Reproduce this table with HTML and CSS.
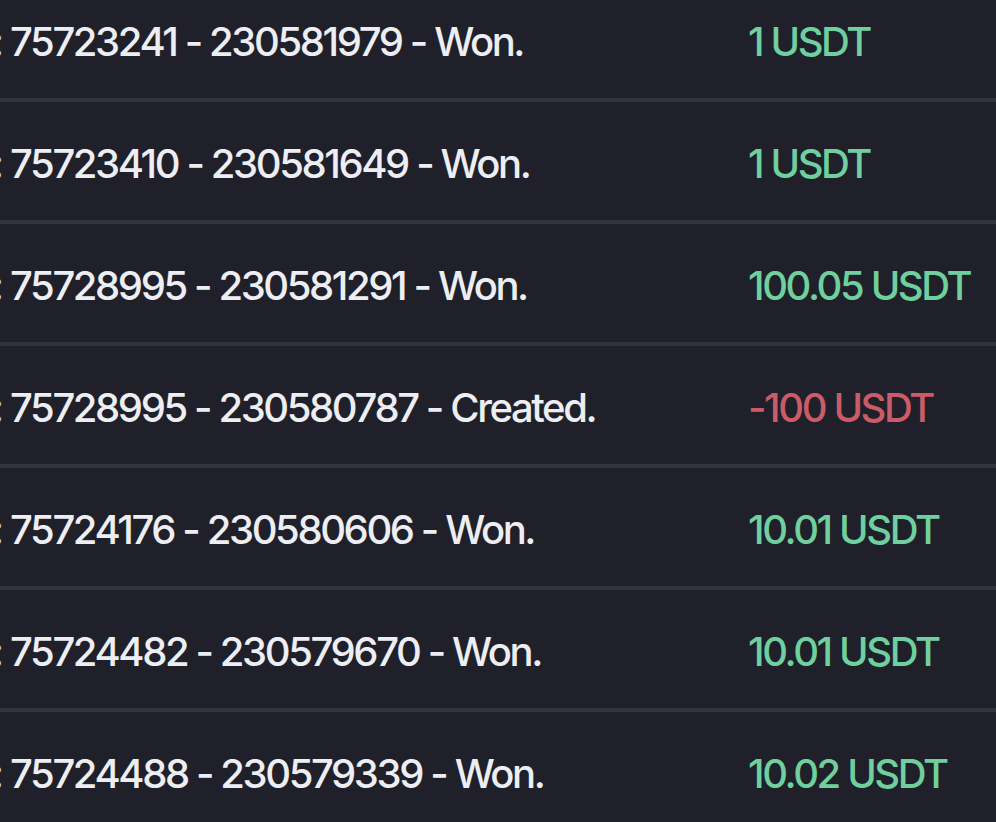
FILE: index.html
```html
<!DOCTYPE html>
<html lang="en">
<head>
<meta charset="utf-8">
<title>Transactions</title>
<link rel="stylesheet" href="styles.css">
</head>
<body>
<div class="list">
  <div class="row"><span class="desc"><span class="cut">:</span>75723241 - 230581979 - Won.</span><span class="amt pos">1 USDT</span></div>
  <div class="row"><span class="desc"><span class="cut">:</span>75723410 - 230581649 - Won.</span><span class="amt pos">1 USDT</span></div>
  <div class="row"><span class="desc"><span class="cut">:</span>75728995 - 230581291 - Won.</span><span class="amt pos">100.05 USDT</span></div>
  <div class="row"><span class="desc"><span class="cut">:</span>75728995 - 230580787 - Created.</span><span class="amt neg">-100 USDT</span></div>
  <div class="row"><span class="desc"><span class="cut">:</span>75724176 - 230580606 - Won.</span><span class="amt pos">10.01 USDT</span></div>
  <div class="row"><span class="desc"><span class="cut">:</span>75724482 - 230579670 - Won.</span><span class="amt pos">10.01 USDT</span></div>
  <div class="row"><span class="desc"><span class="cut">:</span>75724488 - 230579339 - Won.</span><span class="amt pos">10.02 USDT</span></div>
</div>
</body>
</html>
```
FILE: styles.css
```css
html, body {
  margin: 0;
  padding: 0;
  background: #1f2029;
  overflow: hidden;
}
body {
  width: 996px;
  height: 822px;
  font-family: Inter, "Noto Sans", sans-serif;
  -webkit-font-smoothing: antialiased;
}
.list {
  display: flex;
  flex-direction: column;
  margin-top: -20px;
}
.row {
  display: grid;
  grid-template-columns: 738px 1fr;
  align-items: center;
  box-sizing: border-box;
  height: 122px;
  padding-top: 5px;
  border-bottom: 4px solid #31333d;
  padding-left: 10px;
  font-size: 40px;
  font-weight: 500;
  letter-spacing: -2.4px;
}
.desc {
  color: #eceef3;
  white-space: nowrap;
}
.cut {
  display: inline-block;
  width: 10px;
  margin-left: -18px;
  margin-right: 8px;
  color: #c8cad0;
}
.amt {
  white-space: nowrap;
}
.pos { color: #6fcf9e; }
.neg { color: #c95c66; }
```
